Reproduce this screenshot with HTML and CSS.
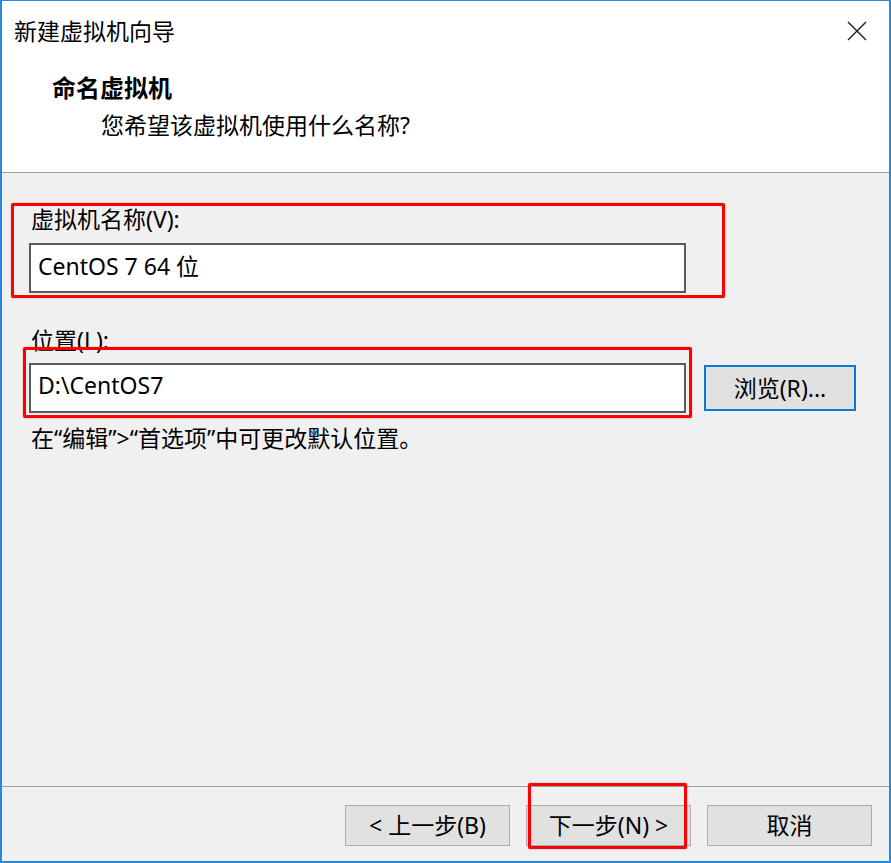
FILE: index.html
```html
<!DOCTYPE html>
<html lang="zh-CN">
<head>
<meta charset="utf-8">
<title>新建虚拟机向导</title>
<link rel="stylesheet" href="styles.css">
</head>
<body>
<div class="window">
  <div class="titlebar">
    <span class="title">新建虚拟机向导</span>
    <span class="close"><svg width="20" height="20" viewBox="0 0 20 20"><path d="M1 1 L19 19 M19 1 L1 19" stroke="#1a1a1a" stroke-width="1.4" fill="none"/></svg></span>
  </div>
  <div class="header">
    <div class="heading">命名虚拟机</div>
    <div class="subheading">您希望该虚拟机使用什么名称?</div>
  </div>
  <div class="body">
    <div class="field field-name">
      <div class="label">虚拟机名称(V):</div>
      <div class="input">CentOS 7 64 位</div>
      <div class="mark mark-name"></div>
    </div>
    <div class="field field-loc">
      <div class="label">位置(L):</div>
      <div class="row">
        <div class="input-wrap">
          <div class="input">D:\CentOS7</div>
          <div class="mark mark-loc"></div>
        </div>
        <button class="btn btn-browse">浏览(R)...</button>
      </div>
    </div>
    <div class="hint">在“编辑”&gt;“首选项”中可更改默认位置。</div>
  </div>
  <div class="footer">
    <button class="btn">&lt; 上一步(B)</button>
    <div class="btn-wrap">
      <button class="btn">下一步(N) &gt;</button>
      <div class="mark mark-next"></div>
    </div>
    <button class="btn">取消</button>
  </div>
</div>
</body>
</html>
```

FILE: styles.css
```css
* { box-sizing: border-box; }
html, body { margin: 0; padding: 0; }
body {
  width: 891px;
  height: 863px;
  overflow: hidden;
  font-family: "Noto Sans", "Noto Sans CJK SC", sans-serif;
  font-size: 23px;
  color: #000;
  background: #fff;
}
.window {
  width: 891px;
  height: 863px;
  border: 2px solid #2b87da;
  border-top-width: 1px;
  display: flex;
  flex-direction: column;
  background: #fff;
}
.titlebar {
  flex: none;
  height: 60px;
  display: flex;
  align-items: center;
  justify-content: space-between;
  padding-left: 12px;
  padding-right: 22px;
}
.title { font-size: 23px; line-height: 1; }
.close { display: flex; }
.header {
  flex: none;
  height: 112px;
  padding-top: 11px;
  border-bottom: 1px solid #a0a0a0;
}
.heading {
  padding-left: 50px;
  font-size: 24px;
  font-weight: 700;
  line-height: 32px;
}
.subheading {
  margin-top: 5px;
  padding-left: 99px;
  line-height: 32px;
}
.body {
  flex: 1;
  background: #f0f0f0;
  padding: 31px 0 0 27px;
}
.field { position: relative; width: 657px; }
.label { line-height: 30px; margin-bottom: 9px; padding-left: 2px; }
.input {
  width: 657px;
  height: 50px;
  background: #fff;
  border: 2px solid #5a5a5a;
  padding-left: 7px;
  display: flex;
  align-items: center;
  padding-bottom: 6px;
}
.field-loc { margin-top: 32px; width: auto; }
.field-loc .label { margin-bottom: 8px; }
.row { display: flex; align-items: center; gap: 18px; }
.input-wrap { position: relative; }
.btn {
  font-family: inherit;
  font-size: 23px;
  color: #000;
  background: #e1e1e1;
  border: 1px solid #adadad;
  width: 165px;
  height: 41px;
  padding: 0 0 3px;
  margin: 0;
  display: flex;
  align-items: center;
  justify-content: center;
}
.btn-browse {
  width: 152px;
  height: 46px;
  border: 2px solid #0a78d7;
}
.hint { margin-top: 10px; line-height: 30px; padding-left: 2px; }
.footer {
  flex: none;
  height: 75px;
  background: #f0f0f0;
  border-top: 1px solid #a0a0a0;
  display: flex;
  justify-content: flex-end;
  align-items: flex-start;
  gap: 16px;
  padding: 18px 17px 0 0;
}
.btn-wrap { position: relative; }
.mark {
  position: absolute;
  border: 3px solid #ff0000;
  border-radius: 2px;
  box-shadow: 0 0 1px #ff0000;
}
.mark-name { left: -18px; right: -39px; top: -1px; bottom: -5px; }
.mark-loc { left: -6px; right: -6px; top: -16px; bottom: -5px; }
.mark-next { left: 2px; right: 4px; top: -22px; bottom: -3px; }
```
